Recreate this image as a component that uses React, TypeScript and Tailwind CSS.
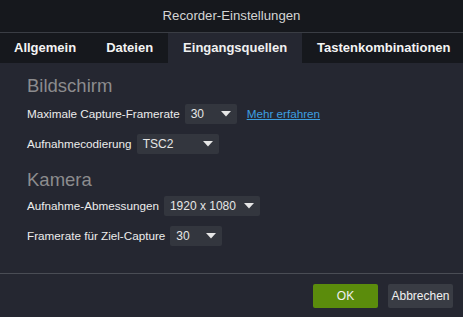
import React from 'react';

const font = { fontFamily: '"Liberation Sans", Arial, sans-serif' };

function Select({ value, width }: { value: string; width: string }) {
  return (
    <div className={`flex h-[20px] items-center justify-between rounded-[2px] bg-[#33363e] pl-[6px] pr-[6px] ${width}`}>
      <span className="text-[12px] text-[#e6e6e6]">{value}</span>
      <svg width="10" height="6" viewBox="0 0 10 6">
        <path d="M0 0 H10 L5 5.5 Z" fill="#e6e6e6" />
      </svg>
    </div>
  );
}

function Row({ label, children }: { label: string; children: React.ReactNode }) {
  return (
    <div className="flex items-center gap-[5px]">
      <span className="text-[11.7px] text-[#ececec]">{label}</span>
      {children}
    </div>
  );
}

export default function App() {
  const tabs = ['Allgemein', 'Dateien', 'Eingangsquellen', 'Tastenkombinationen'];
  return (
    <div className="flex h-[317px] w-[463px] flex-col bg-[#252731]" style={font}>
      <div className="flex h-[33px] items-center justify-center border-b border-[#3a3d44] bg-[#16181d] text-[13.2px] text-[#d4d4d4]">
        Recorder-Einstellungen
      </div>
      <div className="flex h-[30px] bg-[#16181d]">
        {tabs.map((tab, i) => (
          <div
            key={tab}
            className={`flex items-center pr-[15px] text-[13px] font-bold ${i === 0 ? 'pl-[14px]' : 'pl-[15px]'} ${
              tab === 'Eingangsquellen' ? 'bg-[#252731] text-[#f0f0f0]' : 'text-[#f4f4f4]'
            }`}
          >
            {tab}
          </div>
        ))}
      </div>
      <div className="flex flex-1 flex-col px-[27px] pt-[11px]">
        <div className="text-[18.5px] leading-[24px] text-[#8c8c8e]">Bildschirm</div>
        <div className="mt-[6px] flex flex-col gap-[10px]">
          <Row label="Maximale Capture-Framerate">
            <Select value="30" width="w-[52px]" />
            <span className="ml-[5px] text-[11.7px] text-[#3d9fe0] underline">Mehr erfahren</span>
          </Row>
          <Row label="Aufnahmecodierung">
            <Select value="TSC2" width="w-[82px]" />
          </Row>
        </div>
        <div className="mt-[14px] text-[18.5px] leading-[24px] text-[#8c8c8e]">Kamera</div>
        <div className="mt-[4px] flex flex-col gap-[10px]">
          <Row label="Aufnahme-Abmessungen">
            <Select value="1920 x 1080" width="w-[96px]" />
          </Row>
          <Row label="Framerate für Ziel-Capture">
            <Select value="30" width="w-[52px]" />
          </Row>
        </div>
      </div>
      <div className="flex h-[44px] items-center justify-end gap-[10px] border-t border-[#4a4d55] pr-[10px]">
        <button className="h-[24px] w-[65px] rounded-[2px] bg-[#5b8c0c] text-[12px] text-[#f0f0f0]">OK</button>
        <button className="h-[24px] w-[65px] rounded-[2px] bg-[#393c44] text-[12px] text-[#f0f0f0]">Abbrechen</button>
      </div>
    </div>
  );
}
